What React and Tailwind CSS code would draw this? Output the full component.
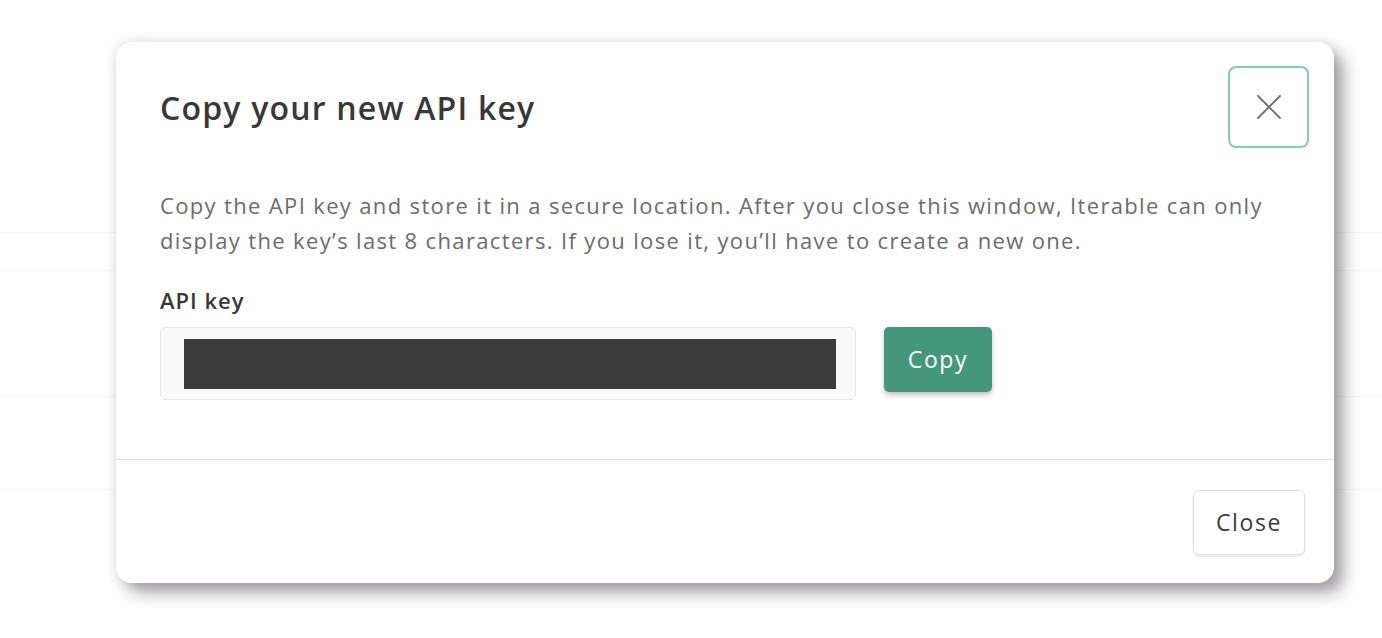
import React from 'react';

const font = { fontFamily: '"Open Sans", "Noto Sans", sans-serif' };

function CloseIcon() {
  return (
    <svg width="26" height="26" viewBox="0 0 26 26" fill="none" stroke="#6f6f6f" strokeWidth="1.8" strokeLinecap="round">
      <path d="M2 2 L24 24" />
      <path d="M24 2 L2 24" />
    </svg>
  );
}

export default function App() {
  return (
    <div className="relative w-full h-[638px] bg-white overflow-hidden" style={font}>
      {/* faint page behind the modal */}
      <div className="flex flex-col">
        <div className="h-[233px] border-b border-[#f7f7f7]" />
        <div className="h-[38px] border-b border-[#f7f7f7]" />
        <div className="h-[126px] border-b border-[#f7f7f7]" />
        <div className="h-[93px] border-b border-[#f7f7f7]" />
      </div>

      {/* modal */}
      <div className="absolute left-[116px] top-[42px] w-[1218px] h-[541px] bg-white rounded-[16px] flex flex-col shadow-[0_0_14px_rgba(0,0,0,0.12),10px_10px_16px_rgba(70,60,75,0.45)]">
        <div className="flex-1 pl-[44px] pr-[25px] pt-[24px]">
          <div className="flex items-start justify-between">
            <h2 className="mt-[22px] text-[32px] font-semibold text-[#383838] leading-[40px] tracking-[1.2px]">Copy your new API key</h2>
            <button className="w-[81px] h-[82px] rounded-[8px] border-2 border-[#7fcdb2] flex items-center justify-center">
              <CloseIcon />
            </button>
          </div>

          <p className="mt-[40px] text-[22px] leading-[35px] text-[#6c6c6c] tracking-[1.35px] pr-[20px]">
            Copy the API key and store it in a secure location. After you close this window, Iterable can only display the key’s last 8 characters. If you lose it, you’ll have to create a new one.
          </p>

          <div className="mt-[28px] text-[22px] font-semibold text-[#383838] leading-[28px] tracking-[1px]">API key</div>

          <div className="mt-[13px] flex items-start gap-[28px]">
            <div className="w-[696px] h-[73px] bg-[#f9f9f9] border border-[#e6e6e6] rounded-[6px] flex items-center pl-[23px] pr-[19px]">
              <div className="w-full h-[50px] bg-[#3b3b3b]" />
            </div>
            <button className="w-[108px] h-[65px] rounded-[5px] bg-[#45977b] text-white text-[23px] tracking-[1.6px] shadow-[0_3px_5px_rgba(0,0,0,0.25)]">
              Copy
            </button>
          </div>
        </div>

        <div className="h-[124px] border-t border-[#e2e2e2] flex items-start justify-end pr-[29px] pt-[30px]">
          <button className="w-[112px] h-[65px] rounded-[6px] border border-[#e0e0e0] bg-white text-[23px] text-[#3b3b3b] tracking-[1.6px] shadow-[0_2px_3px_rgba(0,0,0,0.08)]">
            Close
          </button>
        </div>
      </div>
    </div>
  );
}
